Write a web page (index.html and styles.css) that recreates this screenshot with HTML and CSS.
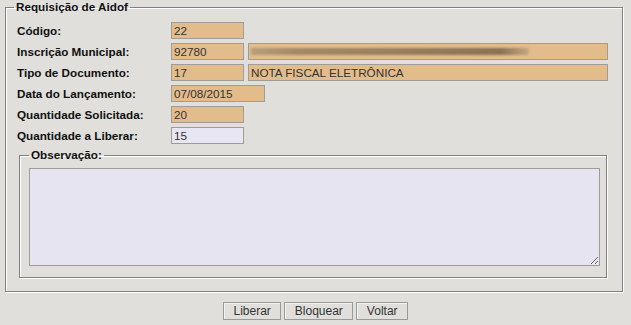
FILE: index.html
```html
<!DOCTYPE html>
<html>

<head>
  <meta charset="utf-8" />
  <title>Requisição de Aidof</title>
  <link rel="stylesheet" href="styles.css">
</head>

<body>
  <form class="form">
    <fieldset class="box">
      <legend class="box-title">Requisição de Aidof</legend>

      <div class="row">
        <label class="label">Código:</label>
        <input class="field" type="text" value="22" readonly>
      </div>

      <div class="row">
        <label class="label">Inscrição Municipal:</label>
        <input class="field" type="text" value="92780" readonly>
        <div class="field field-wide">
          <span class="blurred">CONTRIBUINTE</span>
        </div>
      </div>

      <div class="row">
        <label class="label">Tipo de Documento:</label>
        <input class="field" type="text" value="17" readonly>
        <input class="field field-wide" type="text" value="NOTA FISCAL ELETRÔNICA" readonly>
      </div>

      <div class="row">
        <label class="label">Data do Lançamento:</label>
        <input class="field field-date" type="text" value="07/08/2015" readonly>
      </div>

      <div class="row">
        <label class="label">Quantidade Solicitada:</label>
        <input class="field" type="text" value="20" readonly>
      </div>

      <div class="row">
        <label class="label">Quantidade a Liberar:</label>
        <input class="field field-edit" type="text" value="15">
      </div>

      <fieldset class="box box-inner">
        <legend class="box-title">Observação:</legend>
        <textarea class="notes"></textarea>
      </fieldset>
    </fieldset>

    <div class="actions">
      <button class="btn" type="button">Liberar</button>
      <button class="btn" type="button">Bloquear</button>
      <button class="btn" type="button">Voltar</button>
    </div>
  </form>
</body>

</html>
```

FILE: styles.css
```css
* {
  box-sizing: border-box;
  font-family: "Liberation Sans", Arial, sans-serif;
}

html,
body {
  margin: 0;
  padding: 0;
  background-color: #e0dfdc;
}

.form {
  margin: 0;
}

.box {
  margin: 0 8px 0 5px;
  padding: 8px 8px 13px 8px;
  border: 1px solid #808080;
  box-shadow: 1px 1px 0 #fff, inset 1px 1px 0 #fff;
  min-width: 0;
}

.box-title {
  padding: 0 2px;
  font-size: 11.7px;
  font-weight: bold;
  line-height: 14px;
  color: #111;
}

.row {
  display: flex;
  align-items: center;
  height: 17px;
  margin: 0 0 4px 3px;
}

.label {
  width: 154px;
  flex: 0 0 auto;
  font-size: 11.7px;
  font-weight: bold;
  color: #111;
}

.field {
  width: 73px;
  height: 17px;
  margin: 0 4px 0 0;
  padding: 0 2px;
  border: 1px solid #a09c96;
  background-color: #e2bc8b;
  color: #333;
  font-size: 11.7px;
  outline: none;
}

.field-wide {
  width: 360px;
  display: flex;
  align-items: center;
  overflow: hidden;
}

.field-date {
  width: 94px;
}

.field-edit {
  background-color: #e8e6f2;
}

.blurred {
  display: inline-block;
  width: 278px;
  height: 7px;
  color: transparent;
  font-size: 6px;
  background: linear-gradient(to right, #b29a7a, #9a8264 15%, #8d7659 50%, #7a654b 90%, #c3a783);
  filter: blur(0.8px);
  opacity: 0.85;
}

.box-inner {
  margin: 0 7px 0 5px;
  padding: 6px 6px 11px 9px;
}

.notes {
  display: block;
  width: 100%;
  height: 98px;
  margin: 0;
  border: 1px solid #a09c96;
  background-color: #e6e4f0;
  font-size: 11.7px;
}

.actions {
  text-align: center;
  margin-top: 10px;
  font-size: 0;
}

.btn {
  height: 18px;
  margin: 0 1.5px;
  padding: 0 9.5px;
  border: 1px solid #9a9a9a;
  box-shadow: inset 1px 1px 0 #f2f2f2;
  background-color: #e0dfdc;
  color: #333;
  font-size: 12px;
}
```
